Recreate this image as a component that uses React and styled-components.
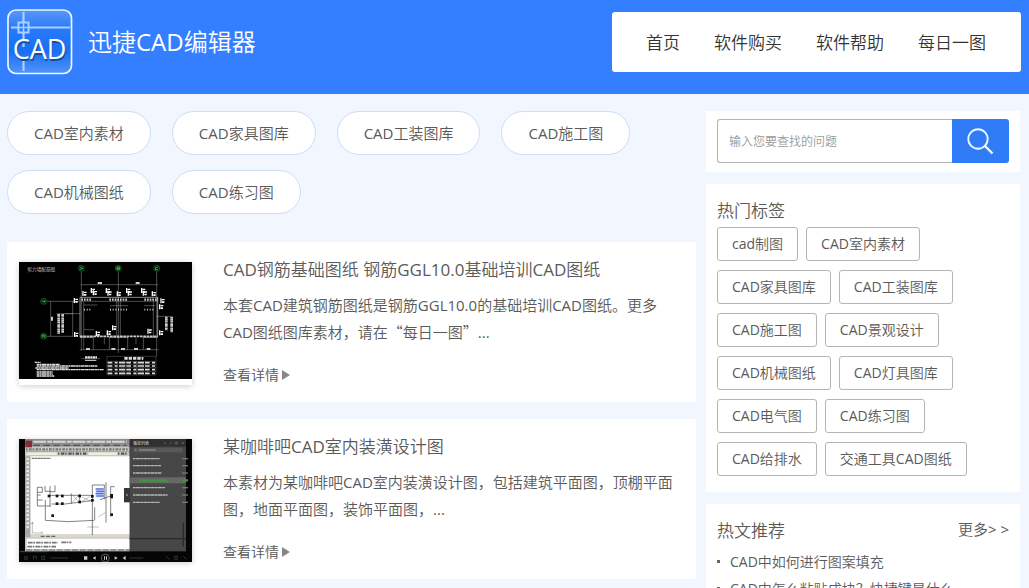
import React from "react";
import styled, { createGlobalStyle } from "styled-components";

const GlobalStyle = createGlobalStyle`
  * { box-sizing: border-box; }
  html { scrollbar-width: none; }
  body {
    margin: 0;
    background: #f1f6ff;
    color: #5a5a5a;
    font-family: "Open Sans", "Noto Sans CJK SC DemiLight", "Noto Sans CJK SC", sans-serif;
    font-weight: 400;
    font-size: 15px;
  }
  h1, h2, h3, p, ul { margin: 0; padding: 0; font-weight: inherit; }
  a { color: inherit; text-decoration: none; }
  svg { display: block; }
`;

const Header = styled.header`
  display: flex;
  justify-content: space-between;
  align-items: flex-start;
  min-height: 94px;
  padding: 0 8px 0 7px;
  background: #337fff;
`;

const Brand = styled.a`
  display: flex;
  align-items: center;
  gap: 15px;
  padding-top: 9px;
  color: #fff;
`;

const BrandName = styled.h1`
  font-size: 24px;
  line-height: 36px;
  white-space: nowrap;
`;

const Nav = styled.nav`
  display: flex;
  align-items: center;
  gap: 34px;
  height: 60px;
  margin-top: 12px;
  padding: 0 35px 2px 34px;
  border-radius: 3px;
  background: #fff;
  color: #333;
  font-size: 17px;
  white-space: nowrap;
`;

const Page = styled.div`
  display: grid;
  grid-template-columns: minmax(0, 1fr) 314px;
  gap: 10px;
  align-items: start;
  padding: 17px 9px 20px 7px;
`;

const Column = styled.div`
  display: flex;
  flex-direction: column;
  gap: ${(p) => p.$gap}px;
`;

const Pills = styled.nav`
  display: flex;
  flex-wrap: wrap;
  gap: 15px 21px;
  margin-bottom: 11px;
`;

const Pill = styled.a`
  height: 44px;
  padding: 0 26px;
  border: 1px solid #cfddf5;
  border-radius: 22px;
  background: #fff;
  line-height: 42px;
`;

const Card = styled.article`
  display: flex;
  align-items: flex-start;
  gap: 31px;
  min-height: 160px;
  padding: 20px 14px 15px 12px;
  background: #fff;
`;

const Thumb = styled.a`
  flex: none;
  width: 173px;
  height: 123px;
  background: #fff;
  box-shadow: 0 1px 6px rgba(0, 0, 0, 0.2);
`;

const CardBody = styled.div`
  flex: 1;
  min-width: 0;
`;

const CardTitle = styled.h2`
  font-size: 17px;
  line-height: 16px;
`;

const CardText = styled.p`
  margin: 14px 0 17px;
  line-height: 27px;
`;

const FullWidth = styled.span`
  font-family: "Noto Sans CJK SC DemiLight", "Noto Sans CJK SC", sans-serif;
  line-height: 1;
`;

const Detail = styled.a`
  display: flex;
  align-items: center;
  gap: 3px;
  font-size: 14px;
  line-height: 24px;
`;

const Panel = styled.section`
  padding: ${(p) => p.$pad};
  background: #fff;
`;

const SearchForm = styled.form`
  display: flex;
  height: 44px;
`;

const SearchInput = styled.input`
  flex: 1;
  min-width: 0;
  padding: 0 11px;
  border: 1px solid #b5b5b5;
  border-right: 0;
  border-radius: 3px 0 0 3px;
  background: #fff;
  color: #555;
  font: inherit;
  font-size: 12px;
  &::placeholder { color: #999; opacity: 1; }
`;

const SearchButton = styled.button`
  display: flex;
  align-items: center;
  justify-content: center;
  width: 57px;
  padding: 0;
  border: 0;
  border-radius: 0 3px 3px 0;
  background: #2f7cf6;
  cursor: pointer;
`;

const PanelTitle = styled.h3`
  font-size: 17px;
  line-height: 24px;
`;

const PanelHead = styled.div`
  display: flex;
  justify-content: space-between;
  align-items: flex-start;
`;

const MoreLink = styled.a`
  line-height: 20px;
`;

const Tags = styled.div`
  display: flex;
  flex-wrap: wrap;
  gap: 9px 8px;
  margin-top: 4px;
`;

const Tag = styled.a`
  height: 34px;
  padding: 0 14px;
  border: 1px solid #b5b5b5;
  border-radius: 3px;
  font-size: 14px;
  line-height: 32px;
`;

const HotList = styled.ul`
  margin-top: 5px;
  list-style: none;
  font-size: 14px;
  line-height: 27px;
`;

const HotItem = styled.li`
  display: flex;
  align-items: center;
  gap: 10px;
  &::before {
    content: "";
    width: 3px;
    height: 3px;
    background: #666;
  }
`;

function Logo() {
  return (
    <svg width="66" height="66" viewBox="0 0 66 66" aria-hidden="true">
      <defs>
        <linearGradient id="logoFill" x1="0" y1="0" x2="0" y2="1">
          <stop offset="0" stopColor="#5a96fb" />
          <stop offset="0.3" stopColor="#287af8" />
          <stop offset="0.65" stopColor="#176ff5" />
          <stop offset="1" stopColor="#5493fb" />
        </linearGradient>
      </defs>
      <rect x="1" y="1" width="63.5" height="63.5" rx="8" fill="url(#logoFill)" stroke="#e8f7ff" strokeWidth="1.7" />
      <g stroke="#a9d0ff" fill="none">
        <path d="M4 18.5H63M16.5 3V38M16.5 52V62" strokeWidth="2.2" />
        <rect x="11.5" y="13.5" width="10" height="10" strokeWidth="2" fill="#287af8" />
        <path d="M16.5 12V25M10 18.5H23" strokeWidth="1.6" />
      </g>
      <g fontFamily="Open Sans, sans-serif" fontSize="27" fontWeight="400" textAnchor="middle">
        <text x="33.5" y="51.5" fill="#134f9e">CAD</text>
        <text x="32.5" y="50" fill="#fff">CAD</text>
      </g>
    </svg>
  );
}

function WallPlan() {
  const noteRows = [
    [74, 92, 338], [80, 150, 344], [80, 262, 349], [76, 176, 355],
    [80, 281, 360], [80, 128, 367], [80, 128, 373], [80, 133, 379],
  ];
  const clusters = [
    [222, 131], [247, 122], [253, 129], [292, 122], [297, 130], [325, 132],
    [353, 122], [358, 130], [398, 122], [403, 130], [430, 132], [196, 152],
    [456, 153], [452, 171], [197, 254], [262, 251], [311, 234], [295, 249],
    [417, 244], [452, 249],
  ];
  return (
    <svg width="173" height="117" viewBox="27 37 519 351" aria-hidden="true">
      <rect x="27" y="37" width="519" height="351" fill="#000" />
      <text x="52" y="65" fontSize="14" fill="#ccc">剪力墙配筋图</text>
      <g stroke="#999" strokeWidth="1.5" fill="none">
        <path d="M214 66V303M325 66V310M440 66V320M212 105H444" />
        <path d="M110 155H208M110 260H190M122 155V260M188 155V260M212 155H440" />
        <path d="M320 150V258M331 150V258M430 155V262M221 158V300M250 262V300M298 262V300M353 262V300M400 262V300" />
        <path d="M209 300H446M222 240H252M222 166H262M300 168H354M403 168H436" />
        <path d="M140 192H190M165 192H212M440 200H484M283 264V284M378 264V284M214 327H270" />
      </g>
      <g stroke="#ccc" strokeWidth="2" fill="none">
        <path d="M210 143H443V155M210 143V262M443 143V262M209 263H250M298 263H353M400 263H443" />
        <path d="M222 180H246M300 180H354M403 180H430" strokeWidth="5" strokeDasharray="3 5" />
        <path d="M214 150H246M298 150H354M403 150H440" strokeWidth="7" strokeDasharray="5 3" />
        <path d="M210 260H443" strokeWidth="5" strokeDasharray="8 2" />
        <path d="M228 298H240M304 298H316M333 298H345M372 298H384M410 298H421M263 100H276M377 100H389" strokeWidth="6" />
        <path d="M126 201V213" strokeWidth="6" />
        <path d="M146 193V252M158 193V250M469 201V242M485 201V248" strokeWidth="8" strokeDasharray="6 1 3 1" />
      </g>
      <g fill="#fff">
        {clusters.map(([x, y]) => (
          <path key={x + "-" + y} d={`M${x - 5} ${y - 7}h4v15h-4zM${x} ${y - 5}h8v4h-8zM${x} ${y + 2}h7v5h-7z`} />
        ))}
      </g>
      <g stroke="#ddd" strokeWidth="4" strokeDasharray="9 1 5 1 12 1">
        {noteRows.map(([a, b, y]) => (
          <path key={y} d={`M${a} ${y}H${b}`} />
        ))}
      </g>
      <g fill="none" stroke="#ddd">
        <path d="M225 323H261" strokeWidth="7" strokeDasharray="7 1" />
        <path d="M225 332H259" strokeWidth="3" />
        <path d="M343 326H400" strokeWidth="8" strokeDasharray="10 3" />
        <path d="M292 335H438M292 344H438M292 354H438M292 365H438M292 376H438" strokeWidth="1" stroke="#999" />
        <path d="M293 339H438M293 349H438M293 360H438M293 371H438" strokeWidth="5" strokeDasharray="14 7 9 4 19 3" />
        <path d="M291 320V376M340 330V376M358 335V376M380 335V376M398 335V376M438 320V376M291 320H438" strokeWidth="1" stroke="#999" />
      </g>
      <g fill="#071b08" stroke="#16751d" strokeWidth="2">
        {[[214, 56], [325, 56], [440, 56], [101, 155], [101, 260]].map(([x, y]) => (
          <circle key={x + "-" + y} cx={x} cy={y} r="9" />
        ))}
      </g>
      <g stroke="#5ed665" strokeWidth="2" fill="none">
        <path d="M209 52L219 56L209 60M321 52H329V60H321ZM321 56H329M444 52Q434 52 436 60H444M96 155H106M103 152V158M97 256L105 264M97 264V256H105V264" />
      </g>
    </svg>
  );
}

function CafePlan() {
  return (
    <svg width="173" height="123" viewBox="27 27 519 369" aria-hidden="true">
      <rect x="27" y="27" width="519" height="369" fill="#050505" />
      <rect x="45" y="28" width="314" height="336" fill="#c7c7c3" />
      <rect x="45" y="28" width="314" height="22" fill="#8c8c8c" />
      <rect x="46" y="32" width="20" height="20" fill="#842c30" />
      <path d="M70 35H350" stroke="#d7d7d7" strokeWidth="6" strokeDasharray="38 4 14 3" />
      <path d="M70 46H350" stroke="#555" strokeWidth="4" strokeDasharray="20 10" />
      <path d="M48 58H356" stroke="#777" strokeWidth="7" strokeDasharray="5 4 8 3" />
      <path d="M48 65H358" stroke="#555" />
      <rect x="50" y="67" width="90" height="8" fill="#eeeedd" />
      <rect x="235" y="67" width="85" height="8" fill="#eeeedd" />
      <path d="M144 71H230M324 71H355" stroke="#555" strokeWidth="7" strokeDasharray="4 5 10 3" />
      <rect x="61" y="79" width="298" height="234" fill="#fff" />
      <rect x="45" y="79" width="16" height="242" fill="#a9a9a9" />
      <path d="M53 84V300" stroke="#eee" strokeWidth="7" strokeDasharray="7 5" />
      <path d="M65 85H122" stroke="#777" strokeWidth="4" strokeDasharray="8 1" />
      <path d="M62 318H359" stroke="#ddd8c6" strokeWidth="9" />
      <path d="M92 319H136" stroke="#666" strokeWidth="4" strokeDasharray="12 4" />
      <rect x="50" y="326" width="309" height="31" fill="#fff" />
      <path d="M54 338H143M154 337H184M52 350H138" stroke="#777" strokeWidth="5" strokeDasharray="14 2 5 3" />
      <path d="M48 360H359" stroke="#888" strokeWidth="5" strokeDasharray="18 5" />
      <g fill="none" stroke="#444" strokeWidth="2">
        <path d="M82 172V228H122M82 172H97V187H82M105 168V184H120V168M82 210H98M106 210V228M82 195H92" />
        <path d="M120 182V230M135 166V185H120M120 196H247M125 222L165 222L252 211M184 190V221M209 193V219" />
        <path d="M247 165H283V208M247 165V315M288 157V278M302 170H314M302 170V260M270 209L302 198" />
        <path d="M106 230V271M254 232V271M106 271L175 275L252 271" />
        <path d="M187 194L207 217M187 217L207 194M216 201L241 214M216 214L241 199M266 260L286 248M232 291H267" strokeWidth="1" />
        <path d="M67 277V309H99M64 283L67 276L70 283M93 306L99 309" strokeWidth="1" />
      </g>
      <g fill="#111">
        {[[117, 198], [141, 198], [157, 198], [209, 198], [247, 199], [141, 221], [157, 221], [209, 216], [247, 211], [128, 257], [305, 196], [305, 201], [305, 254]].map(([x, y]) => (
          <rect key={x + "-" + y} x={x - 4} y={y - 4} width="8" height="8" />
        ))}
      </g>
      <rect x="257" y="174" width="26" height="28" fill="#b9c8ff" />
      <path d="M257 177H281M259 184H282M257 191H281M259 198H282" stroke="#3d5bd2" strokeWidth="3" />
      <rect x="359" y="28" width="169" height="336" fill="#474747" />
      <rect x="359" y="28" width="169" height="22" fill="#303030" />
      <rect x="370" y="53" width="148" height="14" fill="#585858" />
      <text x="369" y="46" fill="#ddd" fontSize="12">播放列表</text>
      <path d="M374 60H438" stroke="#999" strokeWidth="3" strokeDasharray="5 8 45 0" />
      <path d="M462 39H468M479 39H485M497 36H502V42H497ZM515 36L521 42M521 36L515 42" stroke="#777" strokeWidth="2" fill="none" />
      <g stroke="#b5b5b5" strokeWidth="4" strokeDasharray="8 1 12 1">
        {[[86, 449], [107, 453], [129, 454], [173, 466], [195, 473], [217, 449]].map(([y, end]) => (
          <path key={y} d={`M369 ${y}H${end}`} />
        ))}
      </g>
      <g stroke="#777" strokeWidth="4">
        {[86, 107, 129, 173, 195, 217].map((y) => (
          <path key={y} d={`M516 ${y}H534`} />
        ))}
      </g>
      <rect x="359" y="142" width="169" height="18" fill="#676767" />
      <path d="M387 152H473M518 151H534" stroke="#3d9739" strokeWidth="7" />
      <rect x="342" y="174" width="18" height="43" fill="#373737" />
      <path d="M348 195L352 191V199Z" fill="#ddd" />
      <path d="M520 278V350M359 326H528" stroke="#292929" strokeWidth="4" />
      <path d="M29 365H112" stroke="#229d25" strokeWidth="2" />
      <g fill="none" stroke="#4c4c4c" strokeWidth="2">
        <path d="M44 380H52V388H44ZM70 388V379H79V388M95 388V379H104V388ZM121 384H174M358 384H400M469 379L479 389M494 379H502V388H494ZM520 379L530 389" />
        <circle cx="286" cy="384" r="12" stroke="#888" />
      </g>
      <path d="M222 379H232V389H222ZM257 379V389L248 384ZM282 379H285V389H282ZM288 379H291V389H288ZM314 379V389L323 384ZM340 382L347 378V390L340 386Z" fill="#ccc" />
    </svg>
  );
}

function SearchIcon() {
  return (
    <svg width="27" height="27" viewBox="0 0 27 27" fill="none" stroke="#e9f7ff" aria-hidden="true">
      <circle cx="11" cy="11" r="9.7" strokeWidth="1.9" />
      <path d="M18 18L25.5 25.5" strokeWidth="2.4" />
    </svg>
  );
}

function Arrow() {
  return (
    <svg width="8" height="10" viewBox="0 0 8 10" aria-hidden="true">
      <path d="M0 0L8 5L0 10Z" fill="#888" />
    </svg>
  );
}

const navItems = ["首页", "软件购买", "软件帮助", "每日一图"];
const categories = ["CAD室内素材", "CAD家具图库", "CAD工装图库", "CAD施工图", "CAD机械图纸", "CAD练习图"];
const tags = [
  "cad制图", "CAD室内素材", "CAD家具图库", "CAD工装图库", "CAD施工图", "CAD景观设计",
  "CAD机械图纸", "CAD灯具图库", "CAD电气图", "CAD练习图", "CAD给排水", "交通工具CAD图纸",
];
const hotArticles = ["CAD中如何进行图案填充", "CAD中怎么粘贴成块？快捷键是什么"];
const articles = [
  {
    title: "CAD钢筋基础图纸 钢筋GGL10.0基础培训CAD图纸",
    text: (
      <>
        本套CAD建筑钢筋图纸是钢筋GGL10.0的基础培训CAD图纸。更多CAD图纸图库素材，请在<FullWidth>“每日一图”</FullWidth>...
      </>
    ),
    picture: <WallPlan />,
  },
  {
    title: "某咖啡吧CAD室内装潢设计图",
    text: "本素材为某咖啡吧CAD室内装潢设计图，包括建筑平面图，顶棚平面图，地面平面图，装饰平面图，...",
    picture: <CafePlan />,
  },
];

export default function App() {
  return (
    <div lang="zh-CN">
      <GlobalStyle />
      <Header>
        <Brand href="#">
          <Logo />
          <BrandName>迅捷CAD编辑器</BrandName>
        </Brand>
        <Nav>
          {navItems.map((item) => (
            <a key={item} href="#">{item}</a>
          ))}
        </Nav>
      </Header>
      <Page>
        <Column as="main" $gap={17}>
          <Pills>
            {categories.map((item) => (
              <Pill key={item} href="#">{item}</Pill>
            ))}
          </Pills>
          {articles.map(({ title, text, picture }) => (
            <Card key={title}>
              <Thumb href="#" aria-label={title}>{picture}</Thumb>
              <CardBody>
                <CardTitle>{title}</CardTitle>
                <CardText>{text}</CardText>
                <Detail href="#">
                  查看详情
                  <Arrow />
                </Detail>
              </CardBody>
            </Card>
          ))}
        </Column>
        <Column as="aside" $gap={12}>
          <Panel $pad="8px 11px 9px">
            <SearchForm role="search">
              <SearchInput type="text" placeholder="输入您要查找的问题" aria-label="输入您要查找的问题" />
              <SearchButton type="button" aria-label="搜索">
                <SearchIcon />
              </SearchButton>
            </SearchForm>
          </Panel>
          <Panel $pad="15px 11px 16px">
            <PanelTitle>热门标签</PanelTitle>
            <Tags>
              {tags.map((tag) => (
                <Tag key={tag} href="#">{tag}</Tag>
              ))}
            </Tags>
          </Panel>
          <Panel $pad="15px 11px">
            <PanelHead>
              <PanelTitle>热文推荐</PanelTitle>
              <MoreLink href="#">更多&gt; &gt;</MoreLink>
            </PanelHead>
            <HotList>
              {hotArticles.map((item) => (
                <HotItem key={item}>
                  <a href="#">{item}</a>
                </HotItem>
              ))}
            </HotList>
          </Panel>
        </Column>
      </Page>
    </div>
  );
}
